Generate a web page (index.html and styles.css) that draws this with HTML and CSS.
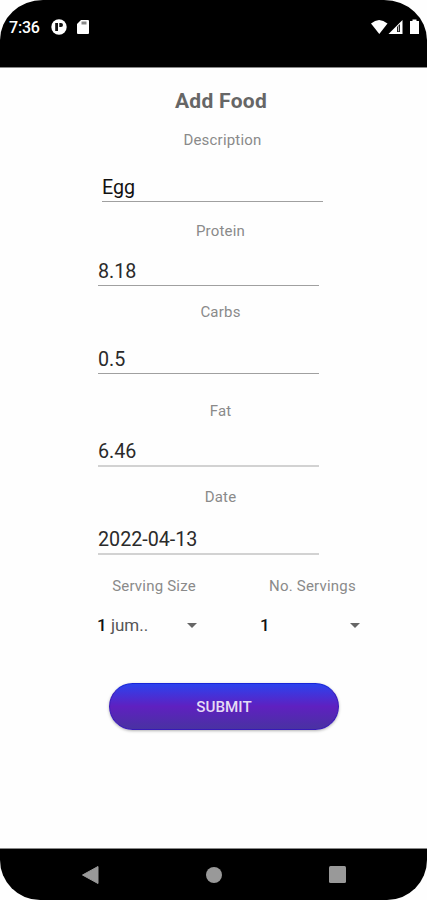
FILE: index.html
```html
<!DOCTYPE html>
<html lang="en">
<head>
<meta charset="utf-8">
<title>Add Food</title>
<link rel="stylesheet" href="styles.css">
</head>
<body>
<div class="phone">
  <header class="status">
    <span class="time">7:36</span>
    <svg class="app-icon" width="16" height="16" viewBox="0 0 16 16"><circle cx="8" cy="8" r="7.700" fill="#fff"/><path d="M4.200 4H7v8H4.200zM8.300 4H10q2 0 2 2t-2 2H8.300z" fill="#111"/></svg>
    <svg class="sd-icon" width="12" height="14" viewBox="0 0 12 14"><path d="M4 0h7q1 0 1 1v12q0 1-1 1H1q-1 0-1-1V4z" fill="#fff"/><path d="M4.500 1.500h5v3h-5z" fill="#888"/></svg>
    <svg class="signals" width="50" height="16" viewBox="0 0 50 16"><path d="M0 4.500Q8-2.500 16.500 4.500L8.300 15z" fill="#fff"/><path d="M17.500 15L31.500 1v14z" fill="#fff"/><path d="M26 8l3-3v8h-3z" fill="#222"/><path d="M27.200 7.200h.8v5h-.8z" fill="#ddd"/><path d="M39 2h2.500V.5h4V2H48v13h-9z" fill="#fff"/></svg>
  </header>
  <main class="form">
    <h1 class="title">Add Food</h1>
    <div class="field description"><label class="label">Description</label><div class="value">Egg</div></div>
    <div class="field protein"><label class="label">Protein</label><div class="value">8.18</div></div>
    <div class="field carbs"><label class="label">Carbs</label><div class="value">0.5</div></div>
    <div class="field fat"><label class="label">Fat</label><div class="value thick">6.46</div></div>
    <div class="field date"><label class="label">Date</label><div class="value thick">2022-04-13</div></div>
    <div class="servings">
      <div class="spinner">
        <div class="spinner-label">Serving Size</div>
        <div class="choice"><span><b class="num">1</b> jum..</span><svg width="10" height="5" viewBox="0 0 10 5"><path d="M0 0h10L5 5z" fill="#666"/></svg></div>
      </div>
      <div class="spinner">
        <div class="spinner-label count">No. Servings</div>
        <div class="choice"><b class="num">1</b><svg width="10" height="5" viewBox="0 0 10 5"><path d="M0 0h10L5 5z" fill="#666"/></svg></div>
      </div>
    </div>
    <button class="submit">SUBMIT</button>
  </main>
  <nav class="navbar">
    <svg width="17" height="18" viewBox="0 0 17 18"><path d="M.5 9L16 .5v17z" fill="#999" stroke="#999" stroke-linejoin="round"/></svg>
    <svg width="16" height="16" viewBox="0 0 16 16"><circle cx="8" cy="8" r="8" fill="#999"/></svg>
    <svg width="17" height="17" viewBox="0 0 17 17"><rect width="17" height="17" rx="1.500" fill="#999"/></svg>
  </nav>
</div>
</body>
</html>
```
FILE: styles.css
```css
* { box-sizing: border-box; }
body { margin: 0; background: #fff; font-family: Roboto, sans-serif; }
.phone { width: 427px; height: 900px; display: flex; flex-direction: column; background: #fefefe; }
svg { display: block; flex: none; }
.status {
  height: 68px;
  padding: 19px 6px 0 9px;
  display: flex;
  align-items: flex-start;
  background: #000;
  border-bottom: 1px solid #888;
  border-radius: 43px 43px 0 0 / 40px 40px 0 0;
  color: #fff;
}
.time { width: 42px; font-size: 16px; font-weight: 500; line-height: 18px; letter-spacing: -.2px; }
.sd-icon { margin: 1px 0 0 10px; }
.signals { margin-left: auto; }
.form { flex: 1; padding: 20px 0 0 98px; }
.title { width: 246px; margin: 0; text-align: center; font-size: 21px; font-weight: 700; line-height: 26px; color: #666; letter-spacing: .3px; }
.field { width: 221px; display: flex; flex-direction: column; justify-content: space-between; }
.label { width: 245px; text-align: center; font-size: 15px; line-height: 20px; color: #8a8a8a; letter-spacing: .2px; }
.value { height: 29px; font-size: 19.7px; line-height: 29px; color: #2a2a2a; border-bottom: 1px solid #a0a0a0; }
.value.thick { height: 30px; line-height: 29px; border-bottom: 2px solid #d2d2d2; }
.description { height: 72px; margin: 16px 0 0 4px; }
.description .label { width: 241px; }
.description .value { color: #111; }
.protein { height: 65px; margin-top: 19px; }
.carbs { height: 72px; margin-top: 16px; }
.fat { height: 66px; margin-top: 27px; }
.date { height: 68px; margin-top: 20px; }
.servings { display: flex; gap: 61px; margin: 21px 0 0 -1px; }
.spinner { width: 102px; }
.spinner-label { text-align: center; white-space: nowrap; font-size: 15px; line-height: 20px; color: #8a8a8a; letter-spacing: .2px; padding-left: 12px; }
.spinner-label.count { padding-left: 3px; }
.choice { height: 22px; margin-top: 18px; padding-right: 2px; display: flex; align-items: center; justify-content: space-between; font-size: 17px; line-height: 22px; color: #555; }
.num { color: #111; font-weight: 500; }
.submit {
  display: block;
  width: 230px;
  height: 47px;
  margin: 47px 0 0 11px;
  padding: 0;
  border: 1px solid #3818b8;
  border-top-color: #1825d8;
  border-radius: 24px;
  background: linear-gradient(#2c42ee, #5f20c0 50%, #4932a2);
  box-shadow: 0 1px 3px rgba(0, 0, 0, .3);
  color: #e4dcf5;
  font: 500 15.2px/47px Roboto, sans-serif;
}
.navbar {
  height: 52px;
  padding: 0 81px 0 82px;
  display: flex;
  align-items: center;
  justify-content: space-between;
  background: #000;
  border-top: 1px solid #888;
  border-radius: 0 0 40px 40px;
}
```
